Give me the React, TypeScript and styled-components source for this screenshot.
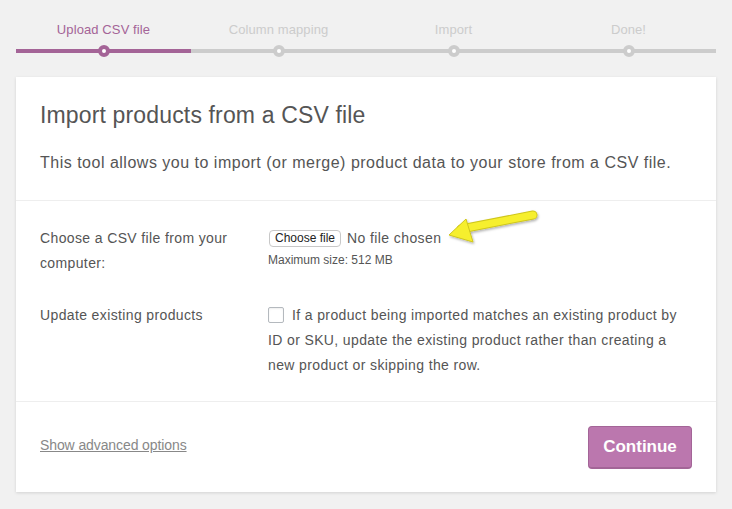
import React from "react";
import styled, { createGlobalStyle } from "styled-components";

const Global = createGlobalStyle`
  html, body { margin: 0; padding: 0; background: #f1f1f1; }
  body { font-family: "Liberation Sans", Arial, sans-serif; color: #555; }
  * { box-sizing: border-box; }
`;

const Page = styled.div`
  padding: 22px 16px 17px;
`;

const Steps = styled.ol`
  display: flex;
  list-style: none;
  margin: 0;
  padding: 0;
`;

const Step = styled.li<{ $active?: boolean }>`
  position: relative;
  flex: 1;
  text-align: center;
  font-size: 13px;
  line-height: 16px;
  letter-spacing: 0.1px;
  padding-bottom: 11px;
  color: ${(p) => (p.$active ? "#a46497" : "#ccc")};
  border-bottom: 4px solid ${(p) => (p.$active ? "#a46497" : "#ccc")};
  &::before {
    content: "";
    position: absolute;
    left: 50%;
    bottom: -8px;
    width: 4px;
    height: 4px;
    margin-left: -6px;
    border: 4px solid ${(p) => (p.$active ? "#a46497" : "#ccc")};
    border-radius: 50%;
    background: #fff;
  }
`;

const Card = styled.div`
  position: relative;
  margin-top: 24px;
  background: #fff;
  box-shadow: 0 1px 3px rgba(0, 0, 0, 0.13);
`;

const Header = styled.header`
  padding: 24px 24px 25px;
  border-bottom: 1px solid #eee;
`;

const Title = styled.h2`
  margin: 0 0 21px;
  font-size: 23px;
  line-height: 29px;
  letter-spacing: 0.15px;
  font-weight: normal;
  color: #555;
`;

const Intro = styled.p`
  margin: 0;
  font-size: 16px;
  line-height: 24px;
  letter-spacing: 0.5px;
  color: #555;
`;

const Form = styled.section`
  padding: 25px 24px 23px;
  display: grid;
  grid-template-columns: 228px 1fr;
  row-gap: 27px;
  border-bottom: 1px solid #eee;
  font-size: 14px;
  line-height: 25px;
  letter-spacing: 0.37px;
`;

const Label = styled.div`
  padding-right: 10px;
  color: #555;
`;

const Field = styled.div`
  color: #555;
`;

const FileRow = styled.div`
  display: flex;
  align-items: center;
  gap: 6px;
  height: 25px;
`;

const FileButton = styled.button`
  font-family: "Liberation Sans", Arial, sans-serif;
  font-size: 12px;
  line-height: 15px;
  letter-spacing: 0;
  height: 17px;
  margin-left: 1px;
  padding: 0 5px;
  background: #fff;
  color: #222;
  border: 1px solid #c8c8c8;
  border-radius: 4px;
`;

const FileName = styled.span`
  font-size: 14px;
  letter-spacing: 0.4px;
  color: #555;
`;

const Hint = styled.div`
  font-size: 12px;
  line-height: 16px;
  letter-spacing: 0;
  margin-top: 1px;
  color: #555;
`;

const CheckLine = styled.label`
  display: block;
`;

const Checkbox = styled.span`
  display: inline-block;
  width: 16px;
  height: 16px;
  border: 1px solid #b4b9be;
  border-radius: 2px;
  box-shadow: inset 0 1px 2px rgba(0, 0, 0, 0.07);
  vertical-align: -3px;
  margin-right: 8px;
`;

const Footer = styled.footer`
  display: flex;
  align-items: center;
  justify-content: space-between;
  padding: 24px 24px 23px;
`;

const AdvLink = styled.a`
  font-size: 14px;
  color: #888;
  text-decoration: underline;
  letter-spacing: -0.1px;
  margin-top: -6px;
`;

const Continue = styled.button`
  font-family: "Liberation Sans", Arial, sans-serif;
  font-size: 17px;
  font-weight: bold;
  color: #fff;
  background: #bb77ae;
  border: 1px solid #a36597;
  border-bottom-width: 2px;
  border-radius: 4px;
  height: 43px;
  width: 104px;
  padding: 0;
`;

const Arrow = styled.svg`
  position: absolute;
  left: 417px;
  top: 130px;
  overflow: visible;
`;

export default function App() {
  return (
    <Page>
      <Global />
      <Steps>
        <Step $active>Upload CSV file</Step>
        <Step>Column mapping</Step>
        <Step>Import</Step>
        <Step>Done!</Step>
      </Steps>
      <Card>
        <Header>
          <Title>Import products from a CSV file</Title>
          <Intro>
            This tool allows you to import (or merge) product data to your store from a CSV file.
          </Intro>
        </Header>
        <Form>
          <Label>Choose a CSV file from your computer:</Label>
          <Field>
            <FileRow>
              <FileButton>Choose file</FileButton>
              <FileName>No file chosen</FileName>
            </FileRow>
            <Hint>Maximum size: 512 MB</Hint>
          </Field>
          <Label>Update existing products</Label>
          <Field>
            <CheckLine>
              <Checkbox />
              If a product being imported matches an existing product by ID or SKU, update the
              existing product rather than creating a new product or skipping the row.
            </CheckLine>
          </Field>
        </Form>
        <Footer>
          <AdvLink>Show advanced options</AdvLink>
          <Continue>Continue</Continue>
        </Footer>
        <Arrow width="90" height="40" viewBox="0 0 90 40">
          <defs>
            <filter id="sh" x="-20%" y="-40%" width="140%" height="180%">
              <feDropShadow dx="1" dy="1.5" stdDeviation="1.2" floodColor="#000" floodOpacity="0.3" />
            </filter>
          </defs>
          <g filter="url(#sh)">
            <line x1="28" y1="22" x2="100" y2="8" stroke="#cfc61c" strokeWidth="9" strokeLinecap="round" />
            <line x1="28" y1="22" x2="100" y2="8" stroke="#f6ef2f" strokeWidth="7" strokeLinecap="round" />
            <polygon points="16,28 33,12 40,35" fill="#f6ef2f" stroke="#cfc61c" strokeWidth="1" strokeLinejoin="round" />
          </g>
        </Arrow>
      </Card>
    </Page>
  );
}
